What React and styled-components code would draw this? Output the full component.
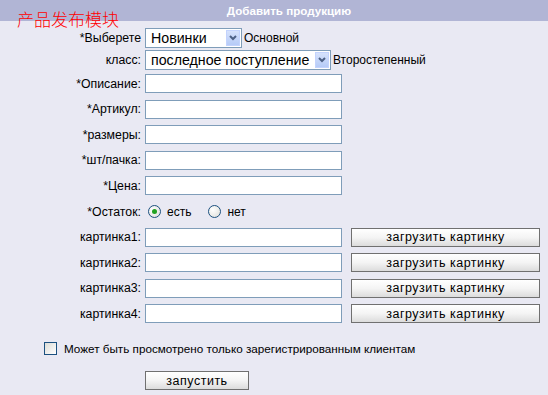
import React from 'react';
import styled, { createGlobalStyle } from 'styled-components';

const GlobalStyle = createGlobalStyle`
    html, body {
        margin: 0;
        padding: 0;
        background: #e9e9f3;
    }
    body {
        font-family: 'Liberation Sans', Arial, sans-serif;
        font-size: 12px;
        color: #000;
    }
`;

const Page = styled.div`
    position: relative;
    width: 548px;
    height: 395px;
    background: #e9e9f3;
    overflow: hidden;
`;

const Header = styled.div`
    height: 21px;
    background: #b1b5d5;
    display: flex;
    align-items: center;
    justify-content: center;
    padding-left: 30px;
    color: #fff;
    font-weight: bold;
    font-size: 11.6px;
`;

const Stamp = styled.div`
    position: absolute;
    top: 8px;
    left: 17px;
    color: #f00;
    font-family: 'Noto Sans CJK SC', sans-serif;
    font-weight: 300;
    font-size: 17px;
    line-height: 22px;
`;

const Form = styled.div`
    padding-top: 6px;
`;

const Row = styled.div`
    display: flex;
    align-items: center;
    height: ${p => p.$h || 25.55}px;
`;

const Label = styled.div`
    width: 141px;
    text-align: right;
    padding-right: 4px;
    flex-shrink: 0;
    white-space: nowrap;
    font-size: 12.3px;
`;

const Field = styled.div`
    display: flex;
    align-items: center;
`;

const Input = styled.div`
    box-sizing: border-box;
    width: 197px;
    height: 19px;
    background: #fff;
    border: 1px solid #7f9db9;
`;

const Select = styled.div`
    box-sizing: border-box;
    width: ${p => p.$w}px;
    height: 20px;
    background: #fff;
    border: 1px solid #7f9db9;
    display: flex;
    align-items: center;
    padding: 1px;
    font-size: 14.2px;
`;

const SelectText = styled.span`
    flex: 1;
    padding-left: 4px;
    white-space: nowrap;
`;

const Arrow = styled.span`
    width: 14px;
    height: 16px;
    background: linear-gradient(#d6e2fc, #b6cbf7);
    border: 1px solid #c3d3fd;
    box-sizing: border-box;
    display: flex;
    align-items: center;
    justify-content: center;
`;

const Note = styled.span`
    margin-left: 2px;
    white-space: nowrap;
`;

const UploadButton = styled.div`
    box-sizing: border-box;
    width: 189px;
    height: 19px;
    margin-left: 9px;
    border: 1px solid #707070;
    background: linear-gradient(#ffffff 0%, #f4f4f4 50%, #dcdcdc 100%);
    display: flex;
    align-items: center;
    justify-content: center;
    font-size: 12.5px;
    letter-spacing: 0.5px;
`;

const Radio = styled.span`
    box-sizing: border-box;
    width: 13px;
    height: 13px;
    border-radius: 50%;
    border: 1px solid #1c5180;
    background: radial-gradient(circle at 35% 35%, #fff, #dcdcd6);
    display: inline-flex;
    align-items: center;
    justify-content: center;
    margin-left: ${p => p.$ml || 0}px;
    &::after {
        content: '';
        width: 5px;
        height: 5px;
        border-radius: 50%;
        background: ${p => (p.$on ? '#21a121' : 'transparent')};
    }
`;

const RadioText = styled.span`
    margin-left: 6px;
`;

const CheckRow = styled.div`
    display: flex;
    align-items: center;
    padding-left: 44px;
    margin-top: 15px;
    height: 14px;
`;

const Check = styled.span`
    box-sizing: border-box;
    width: 13px;
    height: 13px;
    border: 1px solid #1c5180;
    background: linear-gradient(135deg, #dcdcd6, #fff);
`;

const CheckText = styled.span`
    margin-left: 7px;
    font-size: 11.7px;
`;

const SubmitRow = styled.div`
    padding-left: 145px;
    margin-top: 16px;
`;

const SubmitButton = styled.div`
    box-sizing: border-box;
    width: 104px;
    height: 19px;
    border: 1px solid #707070;
    background: linear-gradient(#ffffff 0%, #f4f4f4 50%, #dcdcdc 100%);
    display: flex;
    align-items: center;
    justify-content: center;
    font-size: 12.5px;
    letter-spacing: 0.5px;
`;

const Chevron = () => (
    <svg width="8" height="6" viewBox="0 0 8 6">
        <path d="M1 1 L4 4 L7 1" fill="none" stroke="#4d6185" strokeWidth="2" />
    </svg>
);

const textFields = ['*Описание:', '*Артикул:', '*размеры:', '*шт/пачка:', '*Цена:'];
const pictures = ['картинка1:', 'картинка2:', 'картинка3:', 'картинка4:'];

export default function App() {
    return (
        <Page>
            <GlobalStyle />
            <Header>Добавить продукцию</Header>
            <Stamp>产品发布模块</Stamp>
            <Form>
                <Row $h={22}>
                    <Label>*Выберете</Label>
                    <Field>
                        <Select $w={97}>
                            <SelectText>Новинки</SelectText>
                            <Arrow><Chevron /></Arrow>
                        </Select>
                        <Note>Основной</Note>
                    </Field>
                </Row>
                <Row $h={22}>
                    <Label>класс:</Label>
                    <Field>
                        <Select $w={186}>
                            <SelectText>последное поступление</SelectText>
                            <Arrow><Chevron /></Arrow>
                        </Select>
                        <Note>Второстепенный</Note>
                    </Field>
                </Row>
                {textFields.map(name => (
                    <Row key={name}>
                        <Label>{name}</Label>
                        <Input />
                    </Row>
                ))}
                <Row>
                    <Label>*Остаток:</Label>
                    <Field>
                        <Radio $on $ml={3} />
                        <RadioText>есть</RadioText>
                        <Radio $ml={17} />
                        <RadioText>нет</RadioText>
                    </Field>
                </Row>
                {pictures.map(name => (
                    <Row key={name}>
                        <Label>{name}</Label>
                        <Input />
                        <UploadButton>загрузить картинку</UploadButton>
                    </Row>
                ))}
                <CheckRow>
                    <Check />
                    <CheckText>Может быть просмотрено только зарегистрированным клиентам</CheckText>
                </CheckRow>
                <SubmitRow>
                    <SubmitButton>запустить</SubmitButton>
                </SubmitRow>
            </Form>
        </Page>
    );
}
